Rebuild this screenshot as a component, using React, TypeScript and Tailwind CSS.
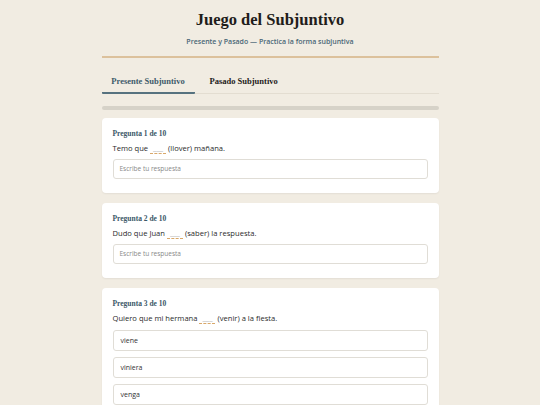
import React from 'react'

const serif = { fontFamily: '"Liberation Serif", "DejaVu Serif", serif' }

type Question = {
  before: string
  verb: string
  options?: string[]
}

const questions: Question[] = [
  { before: 'Temo que', verb: '(llover) mañana.' },
  { before: 'Dudo que Juan', verb: '(saber) la respuesta.' },
  { before: 'Quiero que mi hermana', verb: '(venir) a la fiesta.', options: ['viene', 'viniera', 'venga'] },
]

function QuestionCard({ q, index }: { q: Question; index: number }) {
  return (
    <div className="rounded-[4px] bg-white px-[11px] pt-[11px] pb-[14px] shadow-[0_1px_2px_rgba(0,0,0,0.06)]">
      <div style={serif} className="text-[7.5px] leading-[10px] font-bold text-[#3b5868]">
        Pregunta {index + 1} de 10
      </div>
      <p className="mt-[3px] text-[7.6px] leading-[12px] text-[#2a2a2a]">
        {q.before}{' '}
        <span className="inline-block w-[16px] border-b border-dashed border-[#d9a86a] text-center leading-[9px] text-[#aaa]">
          ___
        </span>{' '}
        {q.verb}
      </p>
      {q.options ? (
        <div className="mt-[6px] flex flex-col gap-[6px]">
          {q.options.map((o) => (
            <div
              key={o}
              className="flex h-[21px] items-center rounded-[3px] border border-[#e0ddd6] px-[7px] text-[7px] text-[#333]"
            >
              {o}
            </div>
          ))}
        </div>
      ) : (
        <div className="mt-[5px] flex h-[20px] items-center rounded-[3px] border border-[#e0ddd6] px-[6px] text-[6.5px] text-[#888]">
          Escribe tu respuesta
        </div>
      )}
    </div>
  )
}

export default function App() {
  return (
    <div className="min-h-[405px] bg-[#f1ece2] font-['Open_Sans',sans-serif]">
      <div className="mx-auto w-[337px]">
        <header className="border-b-2 border-[#dcc19c] pt-[9px] pb-[8px] text-center">
          <h1 style={serif} className="text-[16.5px] leading-[22px] font-bold text-[#1f1d1a]">
            Juego del Subjuntivo
          </h1>
          <p className="mt-[6px] text-[7px] font-semibold text-[#4b6776]">
            Presente y Pasado — Practica la forma subjuntiva
          </p>
        </header>
        <nav style={serif} className="mt-[17px] flex border-b border-[#e3ddd1] text-[8.5px] font-bold">
          <div className="-mb-px w-[93px] rounded-b-[1px] border-b-2 border-[#56727f] pb-[5px] text-center text-[#3e5b6a]">
            Presente Subjuntivo
          </div>
          <div className="ml-[15px] pb-[5px] text-[#1f1d1a]">Pasado Subjuntivo</div>
        </nav>
        <div className="mt-[12px] h-[4px] rounded-full bg-[#d6d2c8]" />
        <div className="mt-[8px] flex flex-col gap-[10px]">
          {questions.map((q, i) => (
            <QuestionCard key={i} q={q} index={i} />
          ))}
        </div>
      </div>
    </div>
  )
}
